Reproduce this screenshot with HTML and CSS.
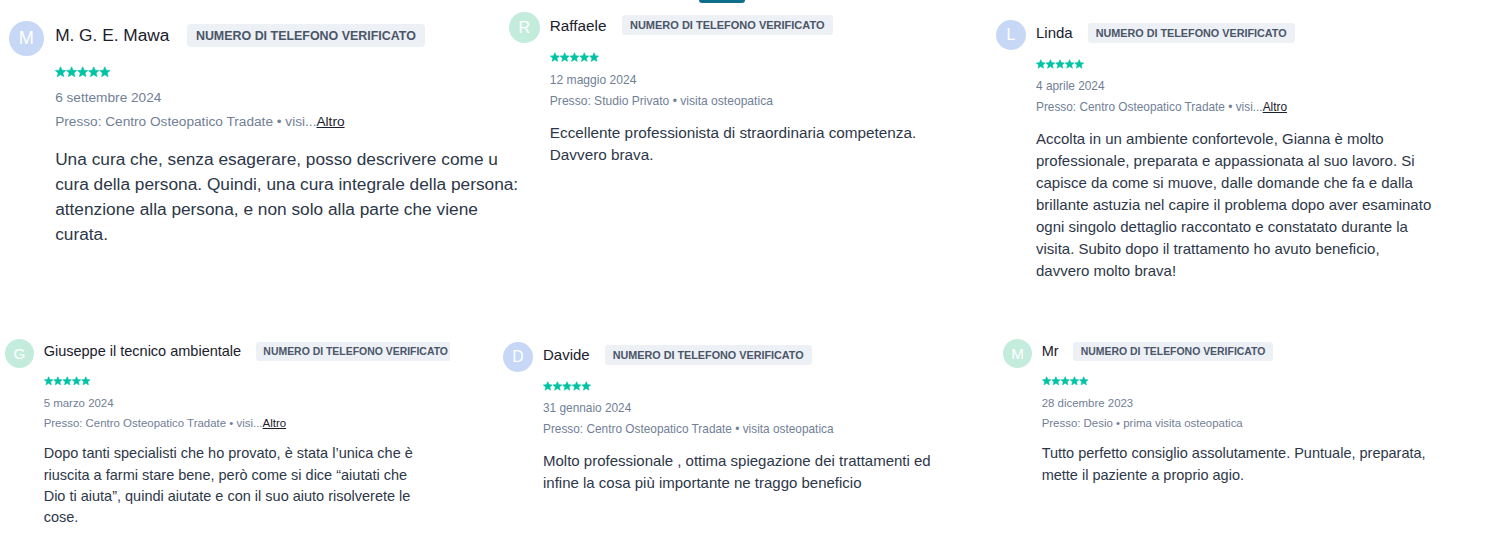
FILE: index.html
```html
<!DOCTYPE html>
<html lang="it">
<head>
<meta charset="utf-8">
<title>Recensioni</title>
<link rel="stylesheet" href="styles.css">
</head>
<body>
<svg class="defs" width="0" height="0" aria-hidden="true">
  <defs>
    <symbol id="star" viewBox="0 0 10 10">
      <path d="M5 0.3 L6.352 3.439 L9.755 3.755 L7.187 6.011 L7.939 9.345 L5 7.6 L2.061 9.345 L2.813 6.011 L0.245 3.755 L3.648 3.439 Z"/>
    </symbol>
  </defs>
</svg>
<div class="page">
  <div class="row row-top">
    <article class="review r1">
      <div class="main">
        <div class="avatar av-blue"><span>M</span></div>
        <div class="content">
          <div class="head"><span class="name">M. G. E. Mawa</span><span class="badge">Numero di telefono verificato</span></div>
          <svg class="stars" viewBox="0 0 50 10"><use href="#star" x="0" width="10" height="10"/><use href="#star" x="10" width="10" height="10"/><use href="#star" x="20" width="10" height="10"/><use href="#star" x="30" width="10" height="10"/><use href="#star" x="40" width="10" height="10"/></svg>
          <div class="date">6 settembre 2024</div>
          <div class="place">Presso: Centro Osteopatico Tradate • visi...<a class="more">Altro</a></div>
          <p class="text">Una cura che, senza esagerare, posso descrivere come una cura della persona. Quindi, una cura integrale della persona: attenzione alla persona, e non solo alla parte che viene curata.</p>
        </div>
      </div>
    </article>
    <article class="review r2">
      <div class="tab"></div>
      <div class="main">
        <div class="avatar av-mint"><span>R</span></div>
        <div class="content">
          <div class="head"><span class="name">Raffaele</span><span class="badge">Numero di telefono verificato</span></div>
          <svg class="stars" viewBox="0 0 50 10"><use href="#star" x="0" width="10" height="10"/><use href="#star" x="10" width="10" height="10"/><use href="#star" x="20" width="10" height="10"/><use href="#star" x="30" width="10" height="10"/><use href="#star" x="40" width="10" height="10"/></svg>
          <div class="date">12 maggio 2024</div>
          <div class="place">Presso: Studio Privato • visita osteopatica</div>
          <p class="text">Eccellente professionista di straordinaria competenza. Davvero brava.</p>
        </div>
      </div>
    </article>
    <article class="review r3">
      <div class="main">
        <div class="avatar av-blue"><span>L</span></div>
        <div class="content">
          <div class="head"><span class="name">Linda</span><span class="badge">Numero di telefono verificato</span></div>
          <svg class="stars" viewBox="0 0 50 10"><use href="#star" x="0" width="10" height="10"/><use href="#star" x="10" width="10" height="10"/><use href="#star" x="20" width="10" height="10"/><use href="#star" x="30" width="10" height="10"/><use href="#star" x="40" width="10" height="10"/></svg>
          <div class="date">4 aprile 2024</div>
          <div class="place">Presso: Centro Osteopatico Tradate • visi...<a class="more">Altro</a></div>
          <p class="text">Accolta in un ambiente confortevole, Gianna è molto professionale, preparata e appassionata al suo lavoro. Si capisce da come si muove, dalle domande che fa e dalla brillante astuzia nel capire il problema dopo aver esaminato ogni singolo dettaglio raccontato e constatato durante la visita. Subito dopo il trattamento ho avuto beneficio, davvero molto brava!</p>
        </div>
      </div>
    </article>
  </div>
  <div class="row row-bottom">
    <article class="review r4">
      <div class="main">
        <div class="avatar av-mint"><span>G</span></div>
        <div class="content">
          <div class="head"><span class="name">Giuseppe il tecnico ambientale</span><span class="badge">Numero di telefono verificato</span></div>
          <svg class="stars" viewBox="0 0 50 10"><use href="#star" x="0" width="10" height="10"/><use href="#star" x="10" width="10" height="10"/><use href="#star" x="20" width="10" height="10"/><use href="#star" x="30" width="10" height="10"/><use href="#star" x="40" width="10" height="10"/></svg>
          <div class="date">5 marzo 2024</div>
          <div class="place">Presso: Centro Osteopatico Tradate • visi...<a class="more">Altro</a></div>
          <p class="text">Dopo tanti specialisti che ho provato, è stata l’unica che è riuscita a farmi stare bene, però come si dice “aiutati che Dio ti aiuta”, quindi aiutate e con il suo aiuto risolverete le cose.</p>
        </div>
      </div>
    </article>
    <article class="review r5">
      <div class="main">
        <div class="avatar av-blue"><span>D</span></div>
        <div class="content">
          <div class="head"><span class="name">Davide</span><span class="badge">Numero di telefono verificato</span></div>
          <svg class="stars" viewBox="0 0 50 10"><use href="#star" x="0" width="10" height="10"/><use href="#star" x="10" width="10" height="10"/><use href="#star" x="20" width="10" height="10"/><use href="#star" x="30" width="10" height="10"/><use href="#star" x="40" width="10" height="10"/></svg>
          <div class="date">31 gennaio 2024</div>
          <div class="place">Presso: Centro Osteopatico Tradate • visita osteopatica</div>
          <p class="text">Molto professionale , ottima spiegazione dei trattamenti ed infine la cosa più importante ne traggo beneficio</p>
        </div>
      </div>
    </article>
    <article class="review r6">
      <div class="main">
        <div class="avatar av-mint"><span>M</span></div>
        <div class="content">
          <div class="head"><span class="name">Mr</span><span class="badge">Numero di telefono verificato</span></div>
          <svg class="stars" viewBox="0 0 50 10"><use href="#star" x="0" width="10" height="10"/><use href="#star" x="10" width="10" height="10"/><use href="#star" x="20" width="10" height="10"/><use href="#star" x="30" width="10" height="10"/><use href="#star" x="40" width="10" height="10"/></svg>
          <div class="date">28 dicembre 2023</div>
          <div class="place">Presso: Desio • prima visita osteopatica</div>
          <p class="text">Tutto perfetto consiglio assolutamente. Puntuale, preparata, mette il paziente a proprio agio.</p>
        </div>
      </div>
    </article>
  </div>
</div>
</body>
</html>
```

FILE: styles.css
```css
* { box-sizing: border-box; }

html, body {
  margin: 0;
  padding: 0;
  background: #ffffff;
}

body {
  width: 1488px;
  height: 534px;
  overflow: hidden;
  font-family: "Liberation Sans", Arial, Helvetica, sans-serif;
}

.defs {
  position: absolute;
  width: 0;
  height: 0;
  overflow: hidden;
}

.page {
  display: flex;
  flex-direction: column;
}

.row {
  display: flex;
  align-items: flex-start;
}

.row-top {
  height: 320px;
}

.review {
  flex: none;
  background: #ffffff;
}

.main {
  display: flex;
  align-items: flex-start;
}

.avatar {
  flex: none;
  width: 2em;
  height: 2em;
  border-radius: 50%;
  display: flex;
  align-items: center;
  justify-content: center;
  color: #ffffff;
}

.avatar span {
  font-size: 1.05em;
  line-height: 1;
}

.av-blue { background: #c6d8f5; }
.av-mint { background: #c4ecdd; }

.content {
  margin-left: 0.667em;
}

.head {
  display: flex;
  align-items: center;
  gap: 1em;
  height: 1.333em;
  margin-top: 0.2em;
  white-space: nowrap;
}

.name {
  font-size: 1em;
  line-height: 1;
  color: #1a202c;
}

.badge {
  display: flex;
  align-items: center;
  height: 1.85em;
  padding: 0 0.74em;
  border-radius: 0.3em;
  background: #edf0f5;
  color: #4a5568;
  font-size: 0.72em;
  font-weight: 700;
  text-transform: uppercase;
}

.stars {
  display: block;
  width: 3.2em;
  height: 0.68em;
  margin-top: 1.05em;
  fill: #00c3a5;
  stroke: #00c3a5;
  stroke-width: 0.5;
  stroke-linejoin: round;
  overflow: visible;
}

.date,
.place {
  font-size: 0.79em;
  line-height: 1.35;
  color: #718096;
  white-space: nowrap;
}

.date {
  margin-top: 0.844em;
}

.place {
  margin-top: 0.42em;
}

.more {
  color: #1a202c;
  text-decoration: underline;
}

.text {
  margin: 0.8em 0 0;
  width: 26.5em;
  font-size: 1em;
  line-height: 1.467;
  color: #2d3748;
}

/* individual cards, each captured at its own scale */
.r1 {
  width: 497px;
  padding: 21px 0 0 9px;
  font-size: 17.3px;
}

.r1 .text {
  width: 27.5em;
  margin-top: 0.88em;
  line-height: 1.445;
}

.r2 {
  position: relative;
  width: 493px;
  padding: 0 0 0 12px;
  font-size: 15.3px;
}

.tab {
  width: 46px;
  height: 2.5px;
  margin: 0 0 9.5px 190px;
  border-radius: 0 0 3px 3px;
  background: #0e6e8c;
}

.r3 {
  width: 498px;
  padding: 20px 0 0 6px;
  font-size: 15px;
}

.r4 {
  width: 450px;
  margin-right: 47px;
  overflow: hidden;
  padding: 19px 0 0 5px;
  font-size: 14.5px;
}

.r5 {
  width: 493px;
  padding: 22px 0 0 6px;
  font-size: 15px;
}

.r6 {
  width: 498px;
  padding: 19px 0 0 13px;
  font-size: 14.5px;
}
```
